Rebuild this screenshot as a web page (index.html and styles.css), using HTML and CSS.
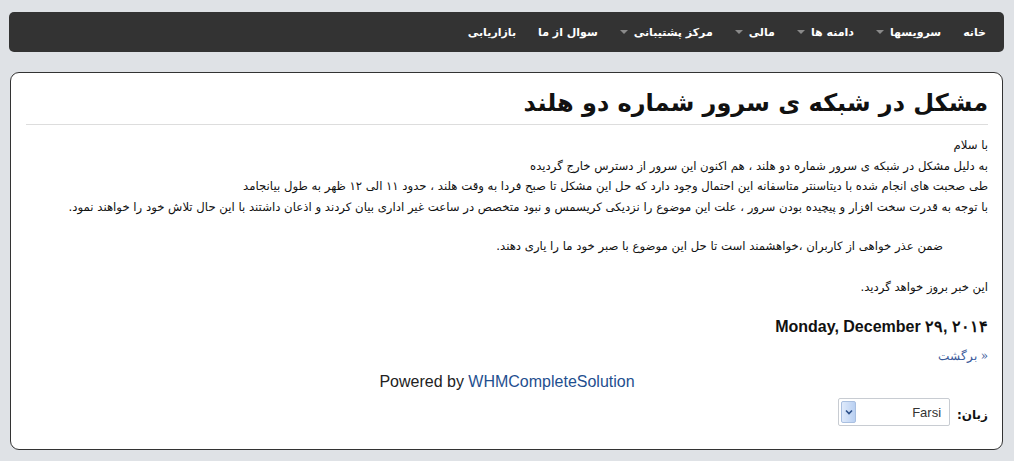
FILE: index.html
```html
<!DOCTYPE html>
<html lang="fa" dir="rtl">
<head>
<meta charset="utf-8">
<title>مشکل در شبکه ی سرور شماره دو هلند</title>
<link rel="stylesheet" href="styles.css">
</head>
<body>
<div class="page">
  <nav class="navbar">
    <ul class="menu">
      <li><a href="#">خانه</a></li>
      <li class="drop"><a href="#">سرویسها</a><span class="caret"></span></li>
      <li class="drop"><a href="#">دامنه ها</a><span class="caret"></span></li>
      <li class="drop"><a href="#">مالی</a><span class="caret"></span></li>
      <li class="drop"><a href="#">مرکز پشتیبانی</a><span class="caret"></span></li>
      <li><a href="#">سوال از ما</a></li>
      <li><a href="#">بازاریابی</a></li>
    </ul>
  </nav>
  <main class="box">
    <h1 class="title">مشکل در شبکه ی سرور شماره دو هلند</h1>
    <div class="article">
      <p class="line">با سلام</p>
      <p class="line">به دلیل مشکل در شبکه ی سرور شماره دو هلند ، هم اکنون این سرور از دسترس خارج گردیده</p>
      <p class="line">طی صحبت های انجام شده با دیتاسنتر متاسفانه این احتمال وجود دارد که حل این مشکل تا صبح فردا به وقت هلند ، حدود ۱۱ الی ۱۲ ظهر به طول بیانجامد</p>
      <p class="line">با توجه به قدرت سخت افزار و پیچیده بودن سرور ، علت این موضوع را نزدیکی کریسمس و نبود متخصص در ساعت غیر اداری بیان کردند و اذعان داشتند با این حال تلاش خود را خواهند نمود.</p>
      <p class="line indent">ضمن عذر خواهی از کاربران ،خواهشمند است تا حل این موضوع با صبر خود ما را یاری دهند.</p>
      <p class="line update">این خبر بروز خواهد گردید.</p>
    </div>
    <p class="date">Monday, December ۲۹, ۲۰۱۴</p>
    <p class="back"><a href="#">« برگشت</a></p>
    <p class="powered">Powered by <a href="#">WHMCompleteSolution</a></p>
    <div class="lang">
      <label class="lang-label">زبان:</label>
      <div class="select">
        <span class="select-value">Farsi</span>
        <span class="select-btn"><svg width="8" height="6" viewBox="0 0 8 6"><path d="M1 1.5 L4 4.5 L7 1.5" fill="none" stroke="#2b4f88" stroke-width="1.6"/></svg></span>
      </div>
    </div>
  </main>
</div>
</body>
</html>
```
FILE: styles.css
```css
html, body {
  margin: 0;
  padding: 0;
  background: #dfe2e6;
}
body {
  font-family: Tahoma, "DejaVu Sans", sans-serif;
  color: #111;
}
.page {
  padding: 12px 10px 0 9px;
}
.navbar {
  height: 40px;
  background: #333333;
  border-radius: 5px;
  display: flex;
  align-items: center;
  padding: 0 18px 0 0;
}
.menu {
  list-style: none;
  margin: 0;
  padding: 0;
  display: flex;
}
.menu li {
  display: flex;
  align-items: center;
  margin-left: 22px;
}
.menu a {
  color: #fff;
  text-decoration: none;
  font-weight: bold;
  font-size: 11px;
}
.caret {
  width: 0;
  height: 0;
  border-left: 4px solid transparent;
  border-right: 4px solid transparent;
  border-top: 4px solid #8a8a8a;
  margin-right: 6px;
}
.box {
  display: block;
  margin-top: 20px;
  margin-right: 1px;
  margin-left: 1px;
  height: 378px;
  box-sizing: border-box;
  background: #fff;
  border: 1px solid #333;
  border-radius: 9px;
  padding: 10px 14px 0 15px;
}
.title {
  margin: 0;
  font-size: 24px;
  font-weight: bold;
  line-height: 40px;
  padding-bottom: 1px;
  border-bottom: 1px solid #ddd;
}
.article {
  padding-top: 10px;
}
.line {
  margin: 0;
  font-size: 11.7px;
  line-height: 20.5px;
}
.indent {
  margin-top: 19px;
  padding-right: 45px;
}
.update {
  margin-top: 20px;
}
.date {
  margin: 20px 0 0;
  font-family: "Liberation Sans", Arial, sans-serif;
  font-weight: bold;
  font-size: 16px;
  line-height: 20px;
  direction: ltr;
  text-align: right;
}
.back {
  margin: 10px 0 0;
  font-size: 12px;
  line-height: 18px;
}
.back a {
  color: #3a5a9a;
  text-decoration: none;
  font-family: "DejaVu Serif", serif;
}
.powered {
  margin: 8px 0 0;
  text-align: center;
  font-family: "Liberation Sans", Arial, sans-serif;
  font-size: 16px;
  line-height: 18px;
  direction: ltr;
  color: #222;
}
.powered a {
  color: #1f4f8f;
  text-decoration: none;
}
.lang {
  display: flex;
  align-items: center;
  gap: 7px;
  margin-top: 7px;
}
.lang-label {
  font-weight: bold;
  font-size: 12px;
  padding-top: 6px;
}
.select {
  width: 112px;
  height: 28px;
  box-sizing: border-box;
  border: 1px solid #c8ccd2;
  border-radius: 2px;
  background: #fff;
  display: flex;
  align-items: center;
  justify-content: space-between;
  padding: 2px;
}
.select-value {
  font-family: "Liberation Sans", Arial, sans-serif;
  font-size: 13px;
  color: #333;
  padding-right: 6px;
}
.select-btn {
  width: 15px;
  height: 22px;
  box-sizing: border-box;
  border: 1px solid #a9bfe0;
  border-radius: 2px;
  background: linear-gradient(to right, #dfeafb, #b9d0f2);
  display: flex;
  align-items: center;
  justify-content: center;
}
```
